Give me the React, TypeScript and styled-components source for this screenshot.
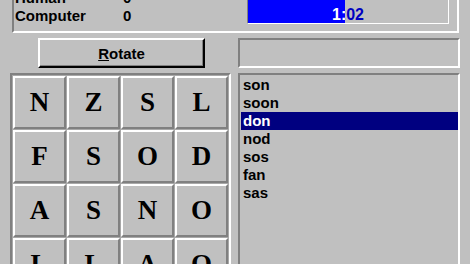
import React from "react";
import styled, { createGlobalStyle } from "styled-components";

const Global = createGlobalStyle`
  html, body { margin: 0; padding: 0; background: #c0c0c0; }
  body { width: 470px; height: 264px; overflow: hidden; }
`;

const Window = styled.div`
  width: 470px;
  height: 264px;
  overflow: hidden;
  background: #c0c0c0;
  font-family: "Liberation Sans", Arial, sans-serif;
  font-weight: bold;
  font-size: 15px;
  color: #000;
`;

const Content = styled.div`
  margin-top: -22px;
  padding: 0 10px;
  display: flex;
  flex-direction: column;
`;

const ScorePanel = styled.div`
  margin-left: 2px;
  width: 447px;
  box-sizing: border-box;
  height: 55px;
  border-top: 2px solid #808080;
  border-left: 2px solid #808080;
  border-bottom: 2px solid #fff;
  border-right: 2px solid #fff;
  display: flex;
  align-items: flex-end;
  justify-content: space-between;
  padding: 0 8px 7px 1px;
`;

const ScoreTable = styled.div`
  display: grid;
  grid-template-columns: 108px auto;
  line-height: 18px;
  margin-bottom: -1px;
`;

const Progress = styled.div`
  position: relative;
  width: 202px;
  height: 36px;
  box-sizing: border-box;
  border-top: 1px solid #808080;
  border-left: 1px solid #808080;
  border-bottom: 1px solid #fff;
  border-right: 1px solid #fff;
  background: #c0c0c0;
  overflow: hidden;
`;

const ProgressLabel = styled.div<{ $inverse?: boolean }>`
  position: absolute;
  left: 0;
  bottom: 0;
  width: 200px;
  text-align: center;
  font-size: 16px;
  line-height: 17px;
  color: ${(p) => (p.$inverse ? "#ffffff" : "#0000c0")};
`;

const ProgressFill = styled.div`
  position: absolute;
  left: 0;
  top: 0;
  bottom: 0;
  background: #0000ff;
  overflow: hidden;
`;

const Columns = styled.div`
  margin-top: 5px;
  display: grid;
  grid-template-columns: 221px 222px;
  column-gap: 7px;
`;

const LeftCol = styled.div`
  display: flex;
  flex-direction: column;
  align-items: flex-start;
`;

const RightCol = styled.div`
  display: flex;
  flex-direction: column;
`;

const Button = styled.button`
  margin-left: 28px;
  width: 167px;
  height: 30px;
  box-sizing: border-box;
  background: #c0c0c0;
  font: inherit;
  color: #000;
  border-top: 2px solid #fff;
  border-left: 2px solid #fff;
  border-right: 2px solid #000;
  border-bottom: 2px solid #000;
  box-shadow: inset -1px -1px 0 #808080;
  padding: 0;
  u { text-decoration: underline; }
`;

const TextBox = styled.div`
  height: 30px;
  box-sizing: border-box;
  border-top: 2px solid #808080;
  border-left: 2px solid #808080;
  border-bottom: 2px solid #fff;
  border-right: 2px solid #fff;
`;

const Board = styled.div`
  margin-top: 5px;
  width: 221px;
  box-sizing: border-box;
  border-top: 2px solid #808080;
  border-left: 2px solid #808080;
  border-bottom: 2px solid #fff;
  border-right: 2px solid #fff;
  padding: 1px;
  display: grid;
  grid-template-columns: repeat(4, 53px);
  grid-auto-rows: 53px;
  gap: 1px;
  background: #a8a8a8;
`;

const Tile = styled.div`
  box-sizing: border-box;
  background: #c0c0c0;
  border-top: 2px solid #fff;
  border-left: 2px solid #fff;
  border-bottom: 2px solid #808080;
  border-right: 2px solid #808080;
  display: flex;
  align-items: center;
  justify-content: center;
  font-family: "Liberation Serif", "Times New Roman", serif;
  font-weight: bold;
  font-size: 27px;
`;

const WordList = styled.div`
  margin-top: 5px;
  height: 200px;
  box-sizing: border-box;
  border-top: 2px solid #808080;
  border-left: 2px solid #808080;
  border-bottom: 2px solid #fff;
  border-right: 2px solid #fff;
  padding: 1px 0 0 1px;
  display: flex;
  flex-direction: column;
`;

const Word = styled.div<{ $selected?: boolean }>`
  height: 18px;
  line-height: 18px;
  padding-left: 2px;
  background: ${(p) => (p.$selected ? "#000080" : "transparent")};
  color: ${(p) => (p.$selected ? "#fff" : "#000")};
`;

const letters = [
  ["N", "Z", "S", "L"],
  ["F", "S", "O", "D"],
  ["A", "S", "N", "O"],
  ["L", "L", "A", "O"],
];

const words = ["son", "soon", "don", "nod", "sos", "fan", "sas"];

export default function App() {
  const pct = 48.5;
  return (
    <Window>
      <Global />
      <Content>
        <ScorePanel>
          <ScoreTable>
            <span>Human</span>
            <span>0</span>
            <span>Computer</span>
            <span>0</span>
          </ScoreTable>
          <Progress>
            <ProgressLabel>1:02</ProgressLabel>
            <ProgressFill style={{ width: `${pct}%` }}>
              <ProgressLabel $inverse>1:02</ProgressLabel>
            </ProgressFill>
          </Progress>
        </ScorePanel>
        <Columns>
          <LeftCol>
            <Button>
              <u>R</u>otate
            </Button>
            <Board>
              {letters.flat().map((l, i) => (
                <Tile key={i}>{l}</Tile>
              ))}
            </Board>
          </LeftCol>
          <RightCol>
            <TextBox />
            <WordList>
              {words.map((w, i) => (
                <Word key={w} $selected={i === 2}>
                  {w}
                </Word>
              ))}
            </WordList>
          </RightCol>
        </Columns>
      </Content>
    </Window>
  );
}
